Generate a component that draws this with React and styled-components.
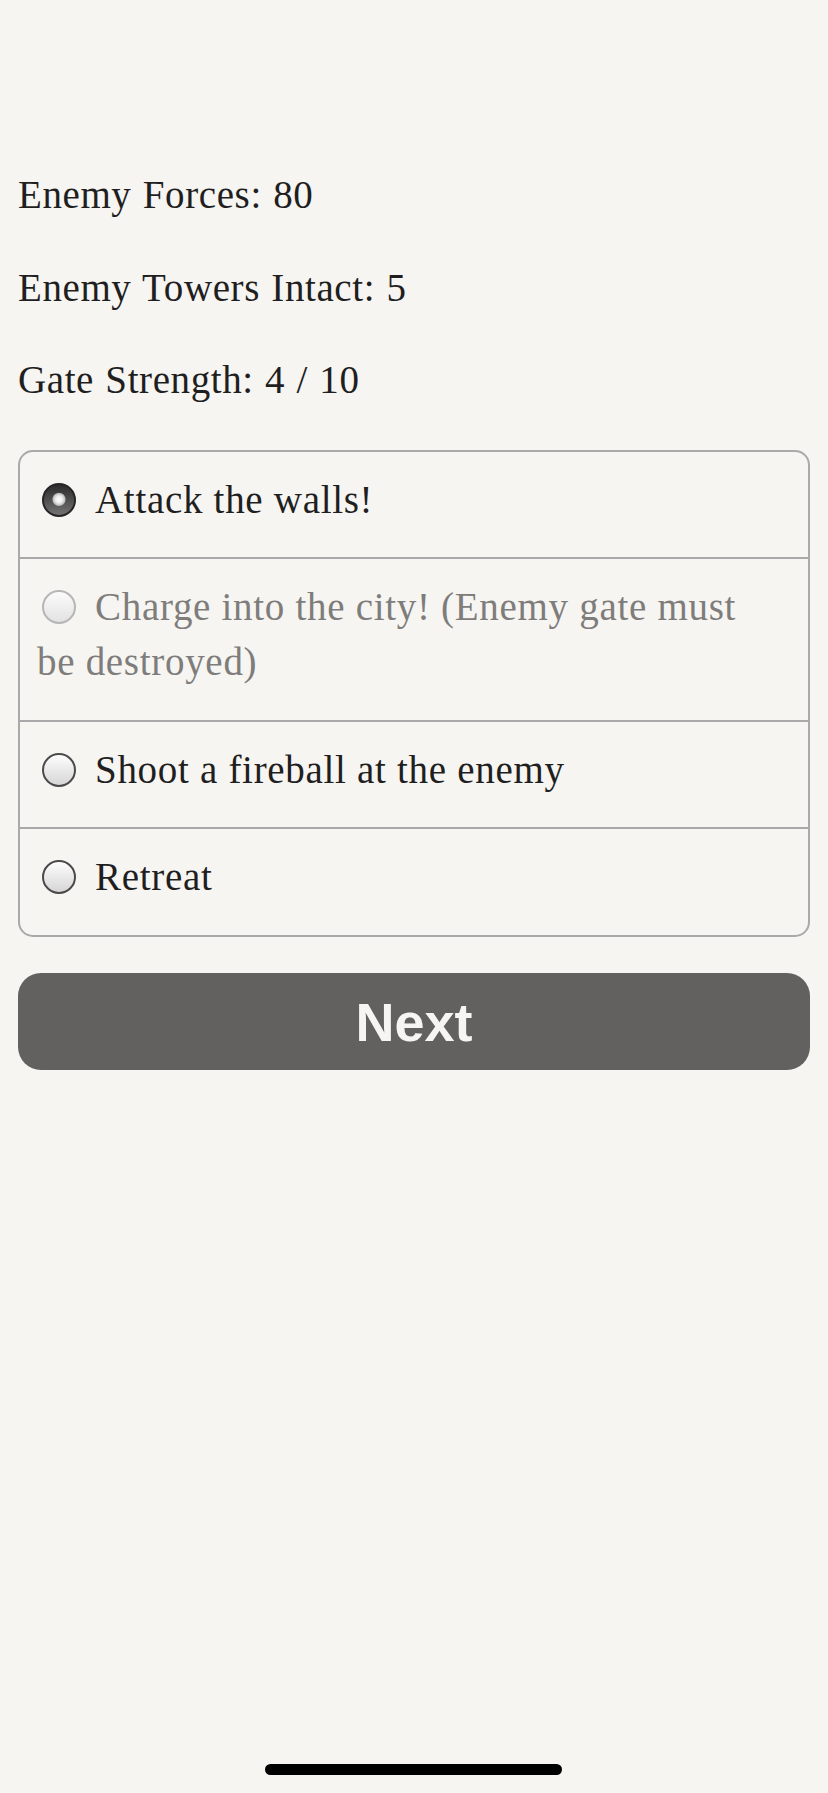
import React, { useState } from "react";
import styled, { createGlobalStyle } from "styled-components";

const GlobalStyle = createGlobalStyle`
	html, body {
		margin: 0;
		padding: 0;
		background: #f7f5f2;
	}
	body {
		font-family: "Liberation Serif", "Times New Roman", serif;
		color: #1f1f1f;
	}
`;

const Page = styled.div`
	min-height: 1793px;
	box-sizing: border-box;
	padding: 172px 18px 0;
`;

const Stat = styled.p`
	margin: 0 0 46.5px;
	font-size: 39px;
	line-height: 46px;
	letter-spacing: 0.6px;
	word-spacing: 1px;
`;

const Choices = styled.div`
	border: 2px solid #a9a9a9;
	border-radius: 15px;
	overflow: hidden;
`;

const Choice = styled.label`
	display: block;
	padding: 20px 40px 30.5px 17px;
	font-size: 39px;
	line-height: 55px;
	letter-spacing: 0.7px;
	color: ${(p) => (p.$disabled ? "#7e7d7b" : "#1f1f1f")};

	& + & {
		border-top: 2px solid #a9a9a9;
	}
`;

const Radio = styled.input.attrs({ type: "radio" })`
	appearance: none;
	-webkit-appearance: none;
	box-sizing: border-box;
	width: 34px;
	height: 34px;
	margin: 0 19px 0 5px;
	vertical-align: -4px;
	border-radius: 50%;
	border: 2px solid ${(p) => (p.disabled ? "#b6b6b6" : "#4a4a4a")};
	background: ${(p) =>
		p.disabled
			? "linear-gradient(#fbfbfb, #e2e2e2)"
			: "linear-gradient(#fdfdfd, #d6d6d6)"};

	&:checked {
		border-color: #262626;
		background: radial-gradient(
				circle at 50% 48%,
				#ffffff 0,
				#ececec 3.5px,
				#bdbdbd 6px,
				transparent 7px
			),
			linear-gradient(#2c2c2c, #737373);
	}
`;

const NextButton = styled.button`
	display: block;
	width: 100%;
	height: 97px;
	margin-top: 36.5px;
	border: none;
	border-radius: 23px;
	background: #62615f;
	color: #f7f5f2;
	font-family: "Liberation Sans", Arial, sans-serif;
	font-weight: bold;
	font-size: 54px;
	padding: 0;
`;

const HomeIndicator = styled.div`
	position: fixed;
	left: 50%;
	bottom: 18px;
	width: 297px;
	height: 11px;
	margin-left: -149px;
	border-radius: 6px;
	background: #000;
`;

const options = [
	{ label: "Attack the walls!" },
	{ label: "Charge into the city! (Enemy gate must be destroyed)", disabled: true },
	{ label: "Shoot a fireball at the enemy" },
	{ label: "Retreat" },
];

function App() {
	const [choice, setChoice] = useState(0);

	return (
		<Page>
			<GlobalStyle />
			<Stat>Enemy Forces: 80</Stat>
			<Stat>Enemy Towers Intact: 5</Stat>
			<Stat>Gate Strength: 4 / 10</Stat>
			<Choices>
				{options.map((opt, i) => (
					<Choice key={opt.label} $disabled={opt.disabled}>
						<Radio
							name="action"
							checked={choice === i}
							disabled={opt.disabled}
							onChange={() => setChoice(i)}
						/>
						{opt.label}
					</Choice>
				))}
			</Choices>
			<NextButton>Next</NextButton>
			<HomeIndicator />
		</Page>
	);
}

export default App;
